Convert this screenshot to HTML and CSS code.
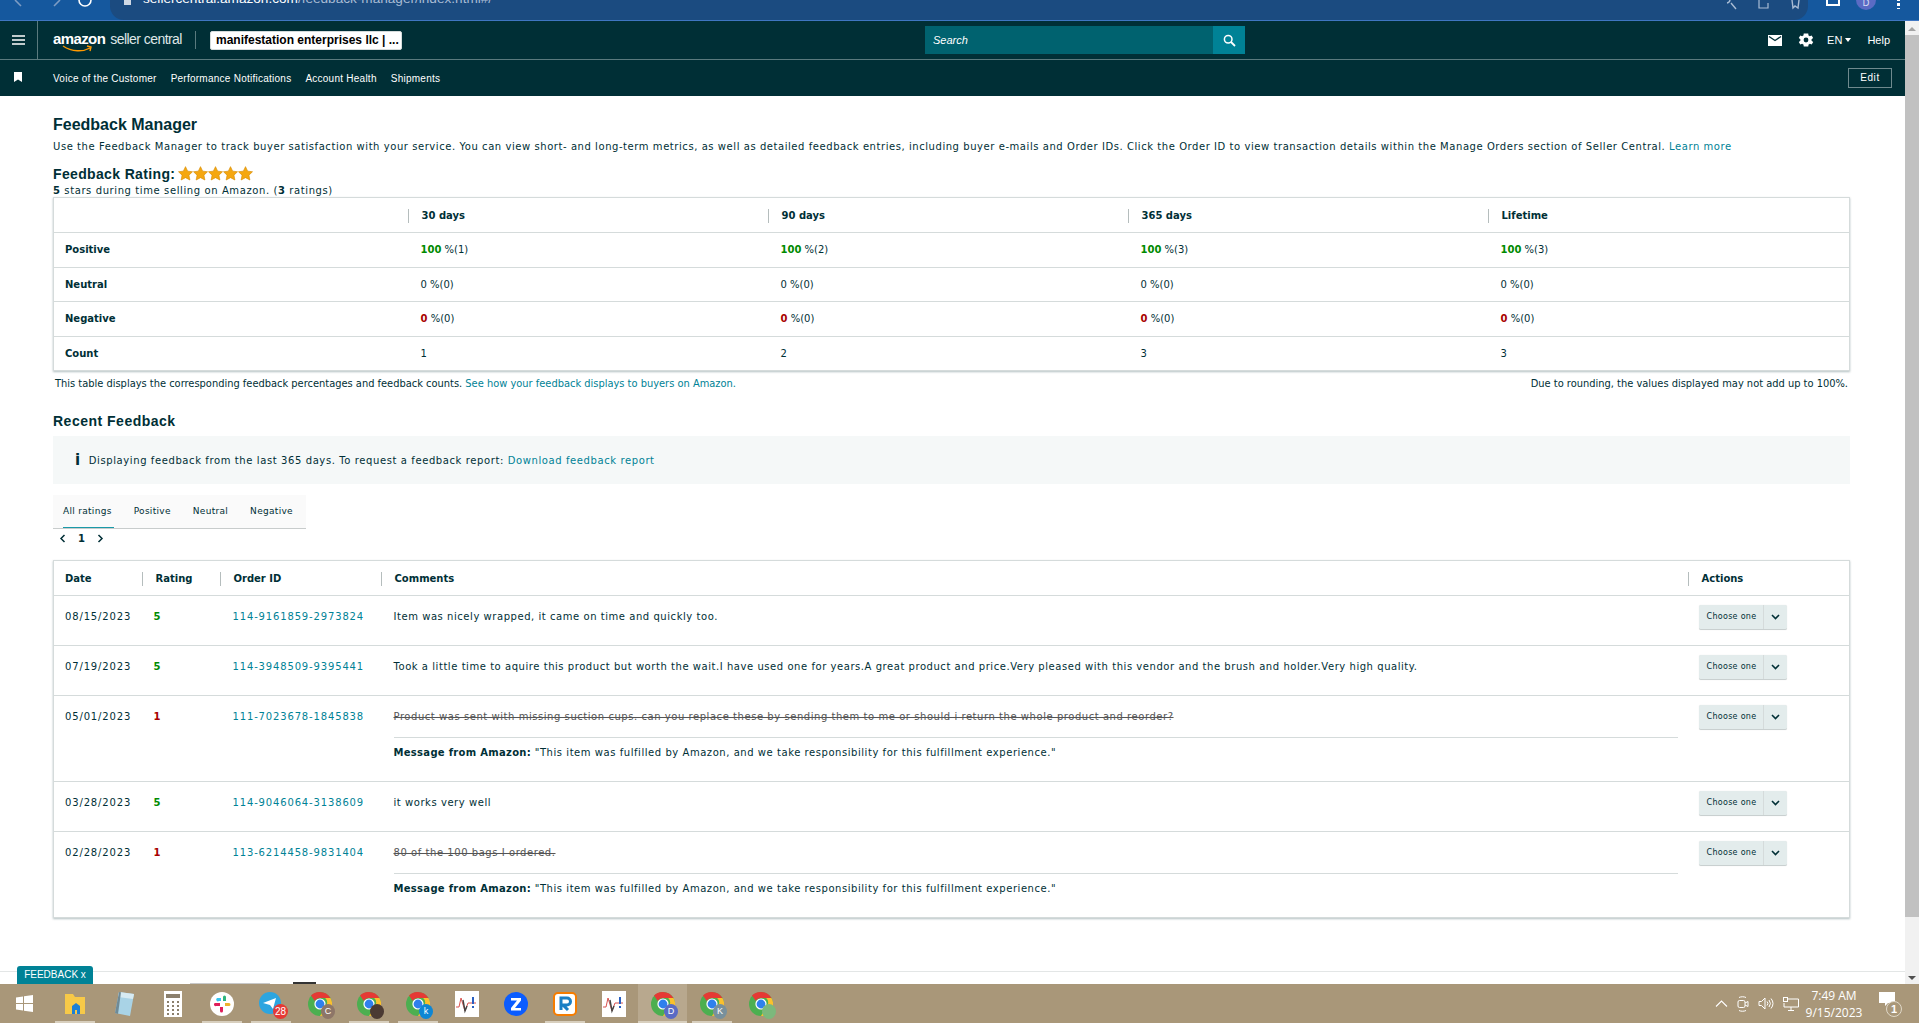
FILE: index.html
```html
<!DOCTYPE html>
<html lang="en">
  <head>
    <meta charset="UTF-8" />
    <meta name="viewport" content="width=device-width, initial-scale=1.0" />
    <title>Feedback Manager</title>
    <link rel="stylesheet" href="styles.css">
  </head>
  <body>
    <svg class="defs" width="0" height="0">
      <symbol id="chrome" viewBox="0 0 24 24">
        <circle cx="12" cy="12" r="12" fill="#4caf50"/>
        <path d="M12 0a12 12 0 0 1 10.4 6H12a6 6 0 0 0-5.2 3L3 3.6A12 12 0 0 1 12 0z" fill="#e53935"/>
        <path d="M22.4 6A12 12 0 0 1 12 24l5.2-9a6 6 0 0 0 0-9z" fill="#fbc02d"/>
        <circle cx="12" cy="12" r="5.6" fill="#fff"/>
        <circle cx="12" cy="12" r="4.4" fill="#2f80ed"/>
      </symbol>
      <symbol id="pulse" viewBox="0 0 24 26">
        <rect width="24" height="26" fill="#fff"/>
        <path d="M1 16h3l2-9 4 13 3-8h8" fill="none" stroke="#d9534f" stroke-width="1"/>
        <path d="M8 9l2 11 2-5" fill="none" stroke="#444" stroke-width="1.4"/>
        <rect x="17" y="6" width="2" height="7" fill="#2a5fc0"/>
        <rect x="17" y="15" width="2" height="2" fill="#2a5fc0"/>
      </symbol>
      <symbol id="star" viewBox="0 0 24 24">
        <path d="M12 1l3.4 7.2 7.8 1-5.7 5.4 1.5 7.8L12 18.6l-7 3.8 1.5-7.8L.8 9.2l7.8-1z" fill="#f5a70f" stroke="#d58a00" stroke-width="1"/>
      </symbol>
      <symbol id="chevron" viewBox="0 0 9 6">
        <path d="M1 1l3.5 3.500L8 1" fill="none" stroke="#002f36" stroke-width="1.6"/>
      </symbol>
    </svg>

    <!-- browser bar -->
    <div class="browser-bar">
      <div class="browser-nav">
        <svg width="12" height="12" viewBox="0 0 12 12"><path d="M3 0l6 6" fill="none" stroke="#7d9cc4" stroke-width="1.6"/></svg>
        <svg width="12" height="12" viewBox="0 0 12 12"><path d="M9 0L3 6" fill="none" stroke="#7d9cc4" stroke-width="1.6"/></svg>
        <svg width="14" height="12" viewBox="0 0 14 12"><path d="M1 0a6 6 0 0 0 12 0" fill="none" stroke="#fff" stroke-width="1.6"/></svg>
      </div>
      <div class="address">
        <span class="lock"></span>
        <span class="url">sellercentral.amazon.com<span class="url-dim">/feedback-manager/index.html#/</span></span>
        <div class="address-icons">
          <svg width="14" height="10" viewBox="0 0 14 10"><path d="M5 0a3.6 3.6 0 0 1-3 3M6 3l5 6" fill="none" stroke="#a9bcd4" stroke-width="1.4"/></svg>
          <svg width="14" height="10" viewBox="0 0 14 10"><path d="M2 0v8h9V3" fill="none" stroke="#a9bcd4" stroke-width="1.2"/></svg>
          <svg width="12" height="10" viewBox="0 0 12 10"><path d="M3 0l1 8 2-2 3 2 1-8" fill="none" stroke="#a9bcd4" stroke-width="1.4"/></svg>
        </div>
      </div>
      <div class="browser-right">
        <span class="ext"></span>
        <span class="avatar">D</span>
        <span class="kebab"></span>
      </div>
    </div>

    <div class="viewport">
      <div class="page">
        <header class="top-row">
          <div class="burger">
            <svg width="13" height="10" viewBox="0 0 13 10"><path d="M0 1h13M0 5h13M0 9h13" stroke="#fff" stroke-width="1.6"/></svg>
          </div>
          <div class="logo">
            <span class="logo-amazon">amazon<svg class="smile" width="32" height="7" viewBox="0 0 32 7"><path d="M1 1c9 6 20 6 27 2M25 1l4 1-1 4" fill="none" stroke="#f90" stroke-width="1.4"/></svg></span>
            <span class="logo-rest">seller central</span>
          </div>
          <div class="account">manifestation enterprises llc | ...</div>
          <div class="search">
            <div class="search-input">Search</div>
            <div class="search-btn">
              <svg width="13" height="13" viewBox="0 0 13 13"><circle cx="5.2" cy="5.2" r="3.8" fill="none" stroke="#fff" stroke-width="1.5"/><path d="M8 8l4 4" stroke="#fff" stroke-width="1.8"/></svg>
            </div>
          </div>
          <div class="top-right">
            <svg width="14" height="11" viewBox="0 0 14 11"><path d="M0 0h14v11H0z" fill="#fff"/><path d="M1 1.500l6 4 6-4" fill="none" stroke="#002f36" stroke-width="1.4"/></svg>
            <svg class="gear" width="18" height="18" viewBox="0 0 24 24"><path d="M19.400 13a7.700 7.700 0 0 0 0-2l2.100-1.600-2-3.500-2.500 1a7.600 7.600 0 0 0-1.700-1L15 3.200h-6l-.4 2.700a7.600 7.600 0 0 0-1.700 1l-2.500-1-2 3.500L4.500 11a7.700 7.700 0 0 0 0 2l-2.100 1.600 2 3.500 2.500-1a7.600 7.600 0 0 0 1.700 1l.4 2.700h6l.4-2.700a7.600 7.600 0 0 0 1.700-1l2.500 1 2-3.500z" fill="#fff"/><circle cx="12" cy="12" r="3.200" fill="#002f36"/></svg>
            <span class="lang">EN<i class="caret"></i></span>
            <span class="help">Help</span>
          </div>
        </header>
        <nav class="nav-row">
          <svg class="bookmark" width="8" height="10" viewBox="0 0 8 10"><path d="M0 0h8v10L4 7.500 0 10z" fill="#fff"/></svg>
          <a>Voice of the Customer</a>
          <a>Performance Notifications</a>
          <a>Account Health</a>
          <a>Shipments</a>
          <span class="edit">Edit</span>
        </nav>

        <main class="content">
          <h1>Feedback Manager</h1>
          <p class="intro">Use the Feedback Manager to track buyer satisfaction with your service. You can view short- and long-term metrics, as well as detailed feedback entries, including buyer e-mails and Order IDs. Click the Order ID to view transaction details within the Manage Orders section of Seller Central. <a class="link">Learn more</a></p>
          <div class="rating-line">
            <h2>Feedback Rating:</h2>
            <div class="stars">
              <svg width="15" height="15"><use href="#star"/></svg>
              <svg width="15" height="15"><use href="#star"/></svg>
              <svg width="15" height="15"><use href="#star"/></svg>
              <svg width="15" height="15"><use href="#star"/></svg>
              <svg width="15" height="15"><use href="#star"/></svg>
            </div>
          </div>
          <p class="rating-sub"><b>5</b> stars during time selling on Amazon. (<b>3</b> ratings)</p>

          <table class="card metrics">
            <thead>
              <tr>
                <th></th>
                <th><span class="th-in">30 days</span></th>
                <th><span class="th-in">90 days</span></th>
                <th><span class="th-in">365 days</span></th>
                <th><span class="th-in">Lifetime</span></th>
              </tr>
            </thead>
            <tbody>
              <tr>
                <td><b>Positive</b></td>
                <td><b class="good">100</b> %(1)</td>
                <td><b class="good">100</b> %(2)</td>
                <td><b class="good">100</b> %(3)</td>
                <td><b class="good">100</b> %(3)</td>
              </tr>
              <tr>
                <td><b>Neutral</b></td>
                <td>0 %(0)</td>
                <td>0 %(0)</td>
                <td>0 %(0)</td>
                <td>0 %(0)</td>
              </tr>
              <tr>
                <td><b>Negative</b></td>
                <td><b class="bad">0</b> %(0)</td>
                <td><b class="bad">0</b> %(0)</td>
                <td><b class="bad">0</b> %(0)</td>
                <td><b class="bad">0</b> %(0)</td>
              </tr>
              <tr>
                <td><b>Count</b></td>
                <td>1</td>
                <td>2</td>
                <td>3</td>
                <td>3</td>
              </tr>
            </tbody>
          </table>
          <div class="table-note">
            <span>This table displays the corresponding feedback percentages and feedback counts. <a class="link">See how your feedback displays to buyers on Amazon.</a></span>
            <span>Due to rounding, the values displayed may not add up to 100%.</span>
          </div>

          <h2 class="recent">Recent Feedback</h2>
          <div class="info-box">
            <span class="info-i">i</span>
            <span>Displaying feedback from the last 365 days. To request a feedback report: <a class="link">Download feedback report</a></span>
          </div>

          <div class="tabs">
            <span class="tab active">All ratings</span>
            <span class="tab">Positive</span>
            <span class="tab">Neutral</span>
            <span class="tab">Negative</span>
          </div>
          <div class="pager">
            <svg width="7" height="9" viewBox="0 0 7 9"><path d="M5.500 1L2 4.500 5.500 8" fill="none" stroke="#002f36" stroke-width="1.5"/></svg>
            <b>1</b>
            <svg width="7" height="9" viewBox="0 0 7 9"><path d="M1.500 1L5 4.500 1.500 8" fill="none" stroke="#002f36" stroke-width="1.5"/></svg>
          </div>

          <table class="card feedback">
            <thead>
              <tr>
                <th>Date</th>
                <th><span class="th-in">Rating</span></th>
                <th><span class="th-in">Order ID</span></th>
                <th><span class="th-in">Comments</span></th>
                <th><span class="th-in">Actions</span></th>
              </tr>
            </thead>
            <tbody>
              <tr class="row-short">
                <td class="digits">08/15/2023</td>
                <td><b class="good">5</b></td>
                <td class="digits"><a class="link">114-9161859-2973824</a></td>
                <td>Item was nicely wrapped, it came on time and quickly too.</td>
                <td><div class="choose"><span class="choose-label">Choose one</span><span class="choose-arrow"><svg width="9" height="6"><use href="#chevron"/></svg></span></div></td>
              </tr>
              <tr class="row-short">
                <td class="digits">07/19/2023</td>
                <td><b class="good">5</b></td>
                <td class="digits"><a class="link">114-3948509-9395441</a></td>
                <td>Took a little time to aquire this product but worth the wait.I have used one for years.A great product and price.Very pleased with this vendor and the brush and holder.Very high quality.</td>
                <td><div class="choose"><span class="choose-label">Choose one</span><span class="choose-arrow"><svg width="9" height="6"><use href="#chevron"/></svg></span></div></td>
              </tr>
              <tr class="row-long">
                <td class="digits">05/01/2023</td>
                <td><b class="bad">1</b></td>
                <td class="digits"><a class="link">111-7023678-1845838</a></td>
                <td>
                  <s class="removed">Product was sent with missing suction cups. can you replace these by sending them to me or should i return the whole product and reorder?</s>
                  <div class="amazon-msg"><b>Message from Amazon:</b> "This item was fulfilled by Amazon, and we take responsibility for this fulfillment experience."</div>
                </td>
                <td><div class="choose"><span class="choose-label">Choose one</span><span class="choose-arrow"><svg width="9" height="6"><use href="#chevron"/></svg></span></div></td>
              </tr>
              <tr class="row-short">
                <td class="digits">03/28/2023</td>
                <td><b class="good">5</b></td>
                <td class="digits"><a class="link">114-9046064-3138609</a></td>
                <td>it works very well</td>
                <td><div class="choose"><span class="choose-label">Choose one</span><span class="choose-arrow"><svg width="9" height="6"><use href="#chevron"/></svg></span></div></td>
              </tr>
              <tr class="row-long">
                <td class="digits">02/28/2023</td>
                <td><b class="bad">1</b></td>
                <td class="digits"><a class="link">113-6214458-9831404</a></td>
                <td>
                  <s class="removed">80 of the 100 bags I ordered.</s>
                  <div class="amazon-msg"><b>Message from Amazon:</b> "This item was fulfilled by Amazon, and we take responsibility for this fulfillment experience."</div>
                </td>
                <td><div class="choose"><span class="choose-label">Choose one</span><span class="choose-arrow"><svg width="9" height="6"><use href="#chevron"/></svg></span></div></td>
              </tr>
            </tbody>
          </table>
        </main>
        <div class="footer-edge">
          <span class="peek-grey"></span>
          <span class="peek-dark"></span>
        </div>
      </div>

      <div class="scrollbar">
        <i class="arrow-up"></i>
        <div class="thumb"></div>
        <i class="arrow-down"></i>
      </div>
    </div>

    <div class="feedback-tab">FEEDBACK <span>x</span></div>

    <!-- windows taskbar -->
    <footer class="taskbar">
      <div class="start">
        <svg width="17" height="17" viewBox="0 0 17 17"><path d="M0 2.500l7-1V8H0zM8 1.300L17 0v8H8zM0 9h7v6.500l-7-1zM8 9h9v8l-9-1.300z" fill="#fff"/></svg>
      </div>
      <div class="task open">
        <svg width="22" height="24" viewBox="0 0 22 24"><path d="M1 2h8l2 3h10v17H1z" fill="#f7c948"/><path d="M8 14l4-3 4 3v8H8z" fill="#1c7fd6"/><rect x="11" y="18" width="2" height="4" fill="#f7c948"/></svg>
      </div>
      <div class="task">
        <svg width="22" height="26" viewBox="0 0 22 26"><path d="M6 1l15 2-4 22-15-3z" fill="#a9d3e6"/><path d="M6 1l15 2-1 5-15-2z" fill="#d7ebf3"/><path d="M2 22L6 1l2 .3L5 23z" fill="#6f8a96"/></svg>
      </div>
      <div class="task">
        <svg width="18" height="26" viewBox="0 0 18 26"><rect width="18" height="26" fill="#fff"/><rect x="2" y="3" width="14" height="4" fill="#8b7f6c"/><path d="M3 11h2M8 11h2M13 11h2M3 15h2M8 15h2M13 15h2M3 19h2M8 19h2M13 19h2M3 23h2M8 23h2M13 23h2" stroke="#8b7f6c" stroke-width="2"/></svg>
      </div>
      <div class="task open">
        <svg width="24" height="24" viewBox="0 0 24 24"><circle cx="12" cy="12" r="12" fill="#fff"/><path d="M7 6h4v3H9a1.500 1.500 0 0 1-2-3z" fill="#36c5f0"/><path d="M13 5a1.500 1.500 0 0 1 3 0v4h-3z" fill="#2eb67d"/><path d="M15 11h4a1.500 1.500 0 0 1 0 3h-4z" fill="#ecb22e"/><path d="M5 11h5v3H6a1.500 1.500 0 0 1-1-3zM10 15h3v4a1.500 1.500 0 0 1-3 0z" fill="#e01e5a"/></svg>
      </div>
      <div class="task open">
        <svg width="24" height="24" viewBox="0 0 24 24"><circle cx="11" cy="11" r="11" fill="#2ca5e0"/><path d="M4 11l13-5-3 11-3-4z" fill="#fff"/></svg>
        <span class="badge-28">28</span>
      </div>
      <div class="task">
        <svg width="24" height="24"><use href="#chrome"/></svg>
        <span class="chip chip-c">C</span>
      </div>
      <div class="task open">
        <svg width="24" height="24"><use href="#chrome"/></svg>
        <span class="chip chip-photo"></span>
      </div>
      <div class="task open">
        <svg width="24" height="24"><use href="#chrome"/></svg>
        <span class="chip chip-k">k</span>
      </div>
      <div class="task">
        <svg width="24" height="26"><use href="#pulse"/></svg>
      </div>
      <div class="task">
        <svg width="24" height="26" viewBox="0 0 24 26"><circle cx="12" cy="13" r="12" fill="#0b5cff"/><path d="M7 7h10v2.500L11 17h6v2.500H7V17l6-7.500H7z" fill="#fff"/></svg>
      </div>
      <div class="task open">
        <svg width="24" height="24" viewBox="0 0 24 24"><rect x="1" y="1" width="22" height="22" rx="4" fill="#fff" stroke="#f57c00" stroke-width="2"/><path d="M8 18V6h6a3.500 3.500 0 0 1 0 7H10l5 5" fill="none" stroke="#1b7fc4" stroke-width="3"/></svg>
      </div>
      <div class="task">
        <svg width="24" height="26"><use href="#pulse"/></svg>
      </div>
      <div class="task open active">
        <svg width="24" height="24"><use href="#chrome"/></svg>
        <span class="chip chip-d">D</span>
      </div>
      <div class="task open">
        <svg width="24" height="24"><use href="#chrome"/></svg>
        <span class="chip chip-kk">K</span>
      </div>
      <div class="task">
        <svg width="24" height="24"><use href="#chrome"/></svg>
        <span class="chip chip-user"></span>
      </div>

      <div class="tray">
        <svg width="13" height="7" viewBox="0 0 13 7"><path d="M1 6.500l5.500-5.500L12 6.500" fill="none" stroke="#fff" stroke-width="1.1"/></svg>
        <svg width="12" height="16" viewBox="0 0 12 16"><rect x="1" y="4.500" width="7" height="7" rx="1.500" fill="none" stroke="#fff"/><path d="M8 7l3-1.500v5L8 9M2 1.500c2-1 5-1 7 0M2 14.500c2 1 5 1 7 0" fill="none" stroke="#fff"/></svg>
        <svg width="16" height="13" viewBox="0 0 16 13"><path d="M1 4.500h2.500L7 1v11L3.500 8.500H1zM9 4.500a3 3 0 0 1 0 4M11 3a5.500 5.500 0 0 1 0 7M13 1.500a8 8 0 0 1 0 10" fill="none" stroke="#fff"/></svg>
        <svg width="16" height="14" viewBox="0 0 16 14"><path d="M4 2h11.500v8H1V6M8 10v3M5 13.500h6" fill="none" stroke="#fff"/><rect x=".5" y=".5" width="4" height="4" fill="none" stroke="#fff"/></svg>
        <div class="clock"><span>7:49 AM</span><span>9/15/2023</span></div>
        <div class="notify">
          <svg width="16" height="14" viewBox="0 0 16 14"><path d="M0 0h16v11H9l-3 3v-3H0z" fill="#fff"/></svg>
          <span class="notify-count">1</span>
        </div>
      </div>
    </footer>
  </body>
</html>
```

FILE: styles.css
```css
* {
  box-sizing: border-box;
}

html,
body {
  height: 100%;
}

body {
  margin: 0;
  width: 1919px;
  height: 1023px;
  overflow: hidden;
  display: flex;
  flex-direction: column;
  position: relative;
  background: white;
  color: #002f36;
  font-family: "DejaVu Sans", sans-serif;
  font-size: 10px;
}

.defs {
  position: absolute;
}

.link {
  color: #008296;
}

.good {
  color: #008a00;
}

.bad {
  color: #a80000;
}

/* browser bar */
.browser-bar {
  height: 21px;
  flex: none;
  display: flex;
  background: #15589e;
  border-bottom: 1px solid #3f76c2;
}

.browser-nav {
  width: 110px;
  flex: none;
  display: flex;
  gap: 15px;
  padding-left: 12px;
}

.browser-nav svg:nth-child(2) {
  margin-left: 12px;
}

.address {
  width: 1698px;
  height: 20px;
  flex: none;
  display: flex;
  gap: 12px;
  overflow: hidden;
  padding-left: 14px;
  background: #1b4b80;
  border-radius: 0 0 14px 14px;
}

.lock {
  width: 7px;
  height: 5px;
  background: #cfd8e4;
  flex: none;
}

.url {
  margin-top: -9px;
  font-family: "Liberation Sans", sans-serif;
  font-size: 13.6px;
  line-height: 16px;
  color: #fff;
}

.url-dim {
  color: #a9bcd4;
}

.address-icons {
  margin-left: auto;
  display: flex;
  gap: 18px;
  padding-right: 7px;
}

.browser-right {
  flex: 1;
  display: flex;
  align-items: flex-start;
  gap: 16px;
  padding-left: 18px;
}

.ext {
  width: 14px;
  height: 6px;
  border: 2px solid #fff;
  border-top: 0;
}

.avatar {
  width: 20px;
  height: 10px;
  background: #5a6bc4;
  border-radius: 0 0 10px 10px;
  color: #d5daf2;
  font-size: 9px;
  line-height: 6px;
  text-align: center;
}

.kebab {
  width: 3px;
  height: 9px;
  margin-left: 5px;
  background: radial-gradient(circle at 1.5px 1.5px, #fff 1.5px, transparent 1.6px) 0 -2px / 3px 5px;
}

/* page area */
.viewport {
  flex: 1;
  display: flex;
  min-height: 0;
}

.page {
  flex: 1;
  min-width: 0;
  display: flex;
  flex-direction: column;
  overflow: hidden;
}

.top-row {
  height: 39px;
  flex: none;
  display: flex;
  align-items: center;
  background: #002f36;
  color: #fff;
  border-bottom: 1px solid #5a7a7e;
}

.burger {
  width: 38px;
  height: 100%;
  flex: none;
  display: flex;
  align-items: center;
  padding-left: 12px;
  border-right: 1px solid #5a7a7e;
}

.logo {
  width: 143px;
  height: 18px;
  margin-left: 15px;
  display: flex;
  gap: 5px;
  flex: none;
  align-items: baseline;
  border-right: 1px solid #5a7a7e;
}

.logo-amazon {
  position: relative;
  font-family: "Liberation Sans", sans-serif;
  font-weight: bold;
  font-size: 15px;
  line-height: 16px;
  letter-spacing: -0.6px;
}

.smile {
  position: absolute;
  left: 9px;
  top: 14px;
}

.logo-rest {
  font-family: "Liberation Sans", sans-serif;
  font-size: 14px;
  line-height: 16px;
  letter-spacing: -0.55px;
  color: #dfe6e7;
  white-space: nowrap;
}

.account {
  width: 192px;
  height: 19px;
  margin-left: 14px;
  flex: none;
  padding-left: 5px;
  background: #fff;
  border: 1px solid #d5dbdb;
  border-radius: 2px;
  color: #000;
  font-family: "Liberation Sans", sans-serif;
  font-size: 12px;
  font-weight: bold;
  line-height: 17px;
  white-space: nowrap;
}

.search {
  display: flex;
  height: 28px;
  margin-left: 523px;
  flex: none;
}

.search-input {
  width: 288px;
  padding-left: 8px;
  background: #00626f;
  color: #fff;
  font-family: "Liberation Sans", sans-serif;
  font-size: 11px;
  font-style: italic;
  line-height: 28px;
}

.search-btn {
  width: 32px;
  display: flex;
  align-items: center;
  justify-content: center;
  background: #008296;
}

.top-right {
  margin-left: auto;
  display: flex;
  align-items: center;
  padding-right: 15px;
  font-family: "Liberation Sans", sans-serif;
  font-size: 11px;
}

.gear {
  margin-left: 15px;
}

.lang {
  margin-left: 12px;
  display: flex;
  align-items: center;
  gap: 3px;
}

.caret {
  width: 0;
  height: 0;
  border: 3px solid transparent;
  border-top: 4px solid #fff;
  border-bottom: 0;
}

.help {
  margin-left: 16px;
}

.nav-row {
  height: 36px;
  flex: none;
  display: flex;
  align-items: center;
  gap: 14px;
  padding: 0 13px 0 14px;
  background: #002f36;
  color: #fff;
  font-family: "Liberation Sans", sans-serif;
  font-size: 10px;
  letter-spacing: 0.25px;
}

.bookmark {
  margin-right: 17px;
  margin-bottom: 3px;
}

.edit {
  margin-left: auto;
  width: 44px;
  height: 20px;
  border: 1px solid #6f8a8e;
  letter-spacing: 0.6px;
  text-align: center;
  line-height: 18px;
}

.content {
  flex: 1;
  min-height: 0;
  padding: 19px 55px 0 53px;
}

h1 {
  margin: 0;
  font-family: "Liberation Sans", sans-serif;
  font-size: 16px;
  font-weight: bold;
  line-height: 20px;
}

.intro {
  margin: 5px 0 0;
  font-size: 10px;
  line-height: 14px;
  letter-spacing: 0.56px;
  white-space: nowrap;
}

.rating-line {
  display: flex;
  align-items: center;
  margin-top: 11px;
  gap: 3px;
}

h2 {
  margin: 0;
  font-family: "Liberation Sans", sans-serif;
  font-size: 14px;
  font-weight: bold;
  line-height: 18px;
  letter-spacing: 0.35px;
}

.stars {
  display: flex;
  margin-bottom: 2px;
}

.rating-sub {
  margin: 1px 0 0;
  line-height: 13px;
  letter-spacing: 0.6px;
}

/* tables */
.card {
  width: 100%;
  border-collapse: collapse;
  table-layout: fixed;
  border: 1px solid #d5dbdb;
  box-shadow: 0 1px 2px rgba(0, 47, 54, 0.3);
}

.card th {
  height: 35px;
  text-align: left;
  font-size: 10px;
  padding: 1px 0 0;
  border-bottom: 1px solid #d5dbdb;
}

.card td {
  padding: 0;
  border-bottom: 1px solid #d5dbdb;
}

.th-in {
  display: block;
  height: 14px;
  line-height: 14px;
  border-left: 1px solid #b5bdbd;
  padding-left: 13px;
}

.metrics th:first-child {
  width: 354px;
}

.metrics th:nth-child(2),
.metrics th:nth-child(3),
.metrics th:nth-child(4) {
  width: 360px;
}

.metrics td {
  height: 34.5px;
  padding-left: 13px;
}

.metrics td:first-child {
  padding-left: 11px;
}

.table-note {
  display: flex;
  justify-content: space-between;
  padding: 0 2px;
  margin-top: 6px;
  font-size: 9.9px;
  line-height: 13px;
}

.recent {
  margin-top: 22px;
  letter-spacing: 0.5px;
}

.info-box {
  display: flex;
  align-items: center;
  gap: 8px;
  height: 48px;
  margin-top: 6px;
  padding-left: 22px;
  background: #f5f8f8;
  letter-spacing: 0.6px;
}

.info-i {
  font-size: 15px;
  font-weight: bold;
}

.tabs {
  display: flex;
  width: 253px;
  height: 34px;
  margin-top: 11px;
  padding-left: 10px;
  background: #fafafa;
  border-bottom: 1px solid #c8cccc;
  font-size: 9px;
  letter-spacing: 0.3px;
  white-space: nowrap;
}

.tab {
  height: 33px;
  line-height: 32px;
  margin-right: 22px;
}

.tab.active {
  border-bottom: 1px solid #1a9aa8;
  padding-right: 2px;
  margin-right: 20px;
}

.pager {
  display: flex;
  align-items: center;
  gap: 12px;
  height: 19px;
  padding-left: 6px;
}

.feedback {
  margin-top: 12px;
}

.feedback th:nth-child(1) {
  width: 88px;
  padding-left: 11px;
}

.feedback th:nth-child(2) {
  width: 78px;
}

.feedback th:nth-child(3) {
  width: 161px;
}

.feedback th:nth-child(5) {
  width: 162px;
}

.feedback td {
  vertical-align: top;
  padding-top: 15px;
  padding-left: 13px;
  letter-spacing: 0.55px;
}

.feedback .digits {
  letter-spacing: 0.85px;
}

.feedback td:first-child {
  padding-left: 11px;
}

.feedback td:nth-child(2) {
  padding-left: 12px;
}

.feedback td:nth-child(5) {
  padding-left: 11px;
  padding-top: 9px;
}

.row-short td {
  height: 50px;
}

.row-long td {
  height: 86px;
}

.removed {
  color: #555;
}

.amazon-msg {
  margin: 15px 10px 0 0;
  padding-top: 9px;
  border-top: 1px solid #d5dbdb;
}

.amazon-msg b {
  letter-spacing: 0.3px;
}

.choose {
  display: flex;
  width: 88px;
  height: 25px;
  border-radius: 2px;
  background: #e3ecec;
  border-bottom: 1px solid #c9d0d0;
  box-shadow: 0 0 1px rgba(0, 0, 0, 0.15);
  font-size: 8px;
  letter-spacing: 0.3px;
  line-height: 24px;
}

.choose-label {
  width: 65px;
  padding-left: 8px;
  border-right: 1px solid #d5dbdb;
}

.choose-arrow {
  flex: 1;
  display: flex;
  align-items: center;
  justify-content: center;
}

.footer-edge {
  height: 13px;
  flex: none;
  display: flex;
  align-items: flex-end;
  border-top: 1px solid #e3e6e6;
}

.peek-grey {
  width: 80px;
  height: 1px;
  margin-left: 190px;
  background: #c8c8c8;
}

.peek-dark {
  width: 23px;
  height: 2px;
  margin-left: 23px;
  background: #333;
}

.scrollbar {
  width: 14px;
  flex: none;
  display: flex;
  flex-direction: column;
  align-items: center;
  background: #f1f1f1;
  padding: 6px 0 4px;
}

.arrow-up,
.arrow-down {
  width: 0;
  height: 0;
  border: 4px solid transparent;
  flex: none;
}

.arrow-up {
  border-bottom: 4px solid #a3a3a3;
  border-top: 0;
}

.arrow-down {
  border-top: 4px solid #505050;
  border-bottom: 0;
  margin-top: auto;
}

.thumb {
  width: 14px;
  height: 882px;
  margin-top: 4px;
  background: #c1c1c1;
}

.feedback-tab {
  position: absolute;
  left: 17px;
  top: 966px;
  width: 76px;
  height: 18px;
  background: #008296;
  border-radius: 3px 3px 0 0;
  color: #fff;
  font-family: "Liberation Sans", sans-serif;
  font-size: 10px;
  line-height: 18px;
  text-align: center;
}

/* taskbar */
.taskbar {
  height: 39px;
  flex: none;
  display: flex;
  background: #a99779;
  color: #fff;
}

.start {
  width: 50px;
  display: flex;
  align-items: center;
  justify-content: center;
  padding-right: 2px;
}

.task {
  position: relative;
  width: 49px;
  display: flex;
  align-items: center;
  justify-content: center;
}

.task.open::after {
  content: "";
  position: absolute;
  left: 5px;
  right: 4px;
  bottom: 0;
  height: 2px;
  background: #d8cfbe;
}

.task.active {
  background: #b8a88e;
}

.task.active::after {
  left: 0;
  right: 0;
}

.badge-28,
.chip {
  position: absolute;
  border-radius: 50%;
  font-family: "Liberation Sans", sans-serif;
  text-align: center;
}

.badge-28 {
  right: 7px;
  bottom: 4px;
  width: 15px;
  height: 15px;
  background: #e53935;
  font-size: 10px;
  line-height: 15px;
}

.chip {
  right: 9px;
  bottom: 4px;
  width: 14px;
  height: 15px;
  font-size: 9px;
  line-height: 15px;
}

.chip-c {
  background: #8d7668;
}

.chip-photo {
  background: #4b3a33;
}

.chip-k {
  background: #0e86d4;
}

.chip-d {
  background: #5a6bc4;
}

.chip-kk {
  background: #78909c;
}

.chip-user {
  background: #7cb87c;
}

.tray {
  margin-left: auto;
  display: flex;
  align-items: center;
  gap: 9px;
  padding-right: 16px;
}

.clock {
  width: 52px;
  display: flex;
  flex-direction: column;
  align-items: center;
  font-family: "Open Sans", sans-serif;
  font-size: 12px;
  line-height: 17px;
  white-space: nowrap;
}

.notify {
  position: relative;
  width: 24px;
  height: 24px;
  margin-left: 10px;
}

.notify-count {
  position: absolute;
  left: 7px;
  top: 9px;
  width: 16px;
  height: 16px;
  border-radius: 50%;
  border: 1px solid #e0d8c8;
  background: #a99779;
  font-family: "Liberation Sans", sans-serif;
  font-size: 11px;
  font-weight: bold;
  line-height: 14px;
  text-align: center;
}
```
